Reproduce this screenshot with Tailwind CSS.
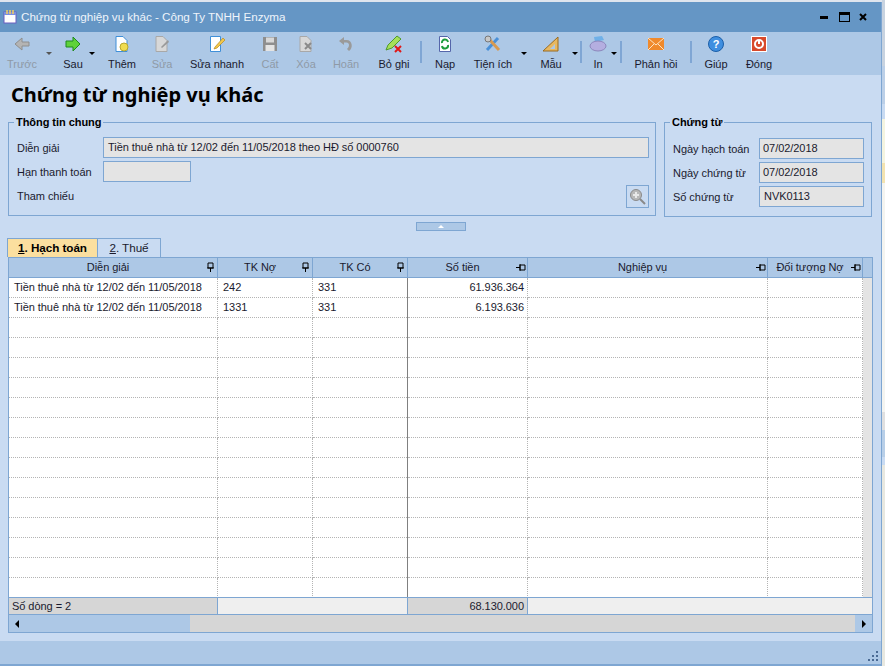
<!DOCTYPE html>
<html lang="en">
  <head>
    <meta charset="UTF-8" />
    <title>Chứng từ nghiệp vụ khác</title>
    <script src="https://cdn.jsdelivr.net/npm/@tailwindcss/browser@4"></script>
  </head>
  <body class="w-[885px] h-[666px] overflow-hidden bg-white font-['Liberation_Sans',Arial,sans-serif] text-[11px] tracking-[-0.05px] whitespace-nowrap text-[#1a1a2e]">
    <div class="flex h-[666px]">
      <div class="w-[882px] flex flex-col">
        <div class="h-[2px] shrink-0 bg-[#dfe5ee]"></div>
        <!-- title bar -->
        <div class="h-[30px] shrink-0 bg-[#6596c5] flex items-center pl-[2px] pr-[13px] border-r border-[#7ea6d2]">
          <svg width="16" height="16" viewBox="0 0 16 16"><rect x="2" y="3" width="12" height="11" fill="#fff" stroke="#6a5fc0"/><rect x="2" y="3" width="12" height="3" fill="#7b8fe0"/><path d="M5 1v4M8 1v4M11 1v4" stroke="#f4d060" stroke-width="1.500"/></svg>
          <span class="ml-[3px] text-[11.7px] text-[#eef4fb]">Chứng từ nghiệp vụ khác - Công Ty TNHH Enzyma</span>
          <div class="ml-auto flex items-center gap-[7px]">
            <div class="w-[8px] h-[3px] bg-black mt-[1px]"></div>
            <div class="w-[11px] h-[10px] border border-black border-t-[3px] ml-[4px]"></div>
            <svg width="10" height="10" viewBox="0 0 10 10" class="ml-[1px]"><path d="M2 2l6 6M8 2l-6 6" stroke="#000" stroke-width="2"/></svg>
          </div>
        </div>
        <!-- toolbar -->
        <div class="h-[43px] shrink-0 bg-[#adc8e6] flex border-r border-[#7ea6d2]">
          <div class="relative w-[44px] flex flex-col items-center text-[#8f9aa6]">
            <svg class="mt-[3px]" width="18" height="18" viewBox="0 0 18 18"><path d="M9 3L2 9l7 6v-4h7V7H9z" fill="#b4b4b4" stroke="#8e8e8e"/></svg>
            <span class="mt-[3px]">Trước</span>
            <div class="absolute left-[46px] top-[20px] w-0 h-0 border-x-[3px] border-x-transparent border-t-[3px] border-t-[#555]"></div>
          </div>
          <div class="relative w-[58px] flex flex-col items-center">
            <svg class="mt-[3px]" width="18" height="18" viewBox="0 0 18 18"><path d="M9 2l7 7-7 7v-4H2V6h7z" fill="#5fd23a" stroke="#1f8a1f"/></svg>
            <span class="mt-[3px]">Sau</span>
            <div class="absolute left-[45px] top-[20px] w-0 h-0 border-x-[3px] border-x-transparent border-t-[3px] border-t-black"></div>
          </div>
          <div class="w-[40px] flex flex-col items-center">
            <svg class="mt-[3px]" width="18" height="18" viewBox="0 0 18 18"><path d="M3 1.500h7l4 4v11H3z" fill="#fff" stroke="#3f8fd8"/><circle cx="11" cy="12" r="4" fill="#f0dc50" stroke="#b8a830"/></svg>
            <span class="mt-[3px]">Thêm</span>
          </div>
          <div class="w-[40px] flex flex-col items-center text-[#8f9aa6]">
            <svg class="mt-[3px]" width="18" height="18" viewBox="0 0 18 18"><path d="M3 1.500h7l4 4v11H3z" fill="#d8d8d8" stroke="#a8a8a8"/><path d="M8 12l7-7 1 2-7 6z" fill="#9a9a9a"/></svg>
            <span class="mt-[3px]">Sửa</span>
          </div>
          <div class="w-[70px] flex flex-col items-center">
            <svg class="mt-[3px]" width="18" height="18" viewBox="0 0 18 18"><path d="M2.500 1.500h10v15h-10z" fill="#fff" stroke="#3f8fd8"/><path d="M7 12l8-9 2 2-8 8-3 1z" fill="#f3c84a" stroke="#b88a20" stroke-width=".7"/></svg>
            <span class="mt-[3px]">Sửa nhanh</span>
          </div>
          <div class="w-[36px] flex flex-col items-center text-[#8f9aa6]">
            <svg class="mt-[3px]" width="18" height="18" viewBox="0 0 18 18"><rect x="2" y="2" width="14" height="14" fill="#8e8e8e"/><rect x="5" y="2.500" width="8" height="5" fill="#d8d8d8"/><rect x="4.500" y="10" width="9" height="6" fill="#e4e4e4"/></svg>
            <span class="mt-[3px]">Cất</span>
          </div>
          <div class="w-[36px] flex flex-col items-center text-[#8f9aa6]">
            <svg class="mt-[3px]" width="18" height="18" viewBox="0 0 18 18"><path d="M3 1.500h7l4 4v11H3z" fill="#d8d8d8" stroke="#a8a8a8"/><path d="M8 8l6 6M14 8l-6 6" stroke="#8a8a8a" stroke-width="2"/></svg>
            <span class="mt-[3px]">Xóa</span>
          </div>
          <div class="w-[44px] flex flex-col items-center text-[#8f9aa6]">
            <svg class="mt-[3px]" width="18" height="18" viewBox="0 0 18 18"><path d="M7 2L2 6l5 4V7.500h2.500c3 0 3.500 4 .5 6.500l2 2c4.500-3 3.500-11-2.500-11H7z" fill="#9a9a9a"/></svg>
            <span class="mt-[3px]">Hoãn</span>
          </div>
          <div class="w-[52px] flex flex-col items-center">
            <svg class="mt-[3px]" width="18" height="18" viewBox="0 0 18 18"><path d="M1 15l2-5L12 1l4 3-9 9z" fill="#a6e05a" stroke="#4f9a2a"/><path d="M10 11l6 6M16 11l-6 6" stroke="#e01818" stroke-width="2"/></svg>
            <span class="mt-[3px]">Bỏ ghi</span>
          </div>
          <div class="w-[2px] h-[22px] mt-[9px] bg-[#7fa6d4]"></div>
          <div class="w-[46px] flex flex-col items-center">
            <svg class="mt-[3px]" width="18" height="18" viewBox="0 0 18 18"><path d="M3.500 1.500h8l3 3v12h-11z" fill="#fff" stroke="#5566aa"/><path d="M6 8a3 3 0 0 1 6-1M12 10a3 3 0 0 1-6 1" fill="none" stroke="#1c9c3c" stroke-width="2"/></svg>
            <span class="mt-[3px]">Nạp</span>
          </div>
          <div class="relative w-[50px] flex flex-col items-center">
            <svg class="mt-[3px]" width="18" height="18" viewBox="0 0 18 18"><path d="M3 15L14 3" stroke="#4a90d8" stroke-width="3"/><path d="M4 3l11 12" stroke="#d89a50" stroke-width="3"/><circle cx="4" cy="4" r="3" fill="#c8c8c8" stroke="#777"/></svg>
            <span class="mt-[3px]">Tiện ích</span>
          </div>
          <div class="relative w-[12px]"><div class="absolute left-[3px] top-[20px] w-0 h-0 border-x-[3px] border-x-transparent border-t-[3px] border-t-black"></div></div>
          <div class="w-[42px] flex flex-col items-center">
            <svg class="mt-[3px]" width="18" height="18" viewBox="0 0 18 18"><path d="M1 16L16 2v14z" fill="#e8b860" stroke="#9a6a20"/><path d="M8 14l5-5v5z" fill="#adc8e6"/></svg>
            <span class="mt-[3px]">Mẫu</span>
          </div>
          <div class="relative w-[8px]"><div class="absolute left-0 top-[20px] w-0 h-0 border-x-[3px] border-x-transparent border-t-[3px] border-t-black"></div></div>
          <div class="w-[2px] h-[22px] mt-[9px] bg-[#7fa6d4]"></div>
          <div class="relative w-[32px] flex flex-col items-center">
            <svg class="mt-[3px]" width="18" height="18" viewBox="0 0 18 18"><path d="M5 2l8-1 2 4-9 2z" fill="#6fb0e8"/><ellipse cx="9" cy="11" rx="8" ry="5" fill="#b4aee0" stroke="#8c86bc"/></svg>
            <span class="mt-[3px]">In</span>
            <div class="absolute left-[29px] top-[20px] w-0 h-0 border-x-[3px] border-x-transparent border-t-[3px] border-t-black"></div>
          </div>
          <div class="w-[2px] h-[22px] mt-[9px] ml-[6px] bg-[#7fa6d4]"></div>
          <div class="w-[68px] flex flex-col items-center">
            <svg class="mt-[3px]" width="18" height="18" viewBox="0 0 18 18"><rect x="1" y="3" width="16" height="12" fill="#f08a2c"/><path d="M1 3l8 7 8-7M1 15l6-6M17 15l-6-6" fill="none" stroke="#fde4c4"/></svg>
            <span class="mt-[3px]">Phản hồi</span>
          </div>
          <div class="w-[2px] h-[22px] mt-[9px] bg-[#7fa6d4]"></div>
          <div class="w-[48px] flex flex-col items-center">
            <svg class="mt-[3px]" width="18" height="18" viewBox="0 0 18 18"><circle cx="9" cy="9" r="7.500" fill="#3f8fe0" stroke="#1c5fa8"/><text x="9" y="13" text-anchor="middle" font-size="11" font-weight="700" fill="#fff">?</text></svg>
            <span class="mt-[3px]">Giúp</span>
          </div>
          <div class="w-[38px] flex flex-col items-center">
            <svg class="mt-[3px]" width="18" height="18" viewBox="0 0 18 18"><rect x="1.500" y="1.500" width="15" height="15" fill="#d84a2c" stroke="#fff"/><circle cx="9" cy="9" r="4" fill="none" stroke="#fff" stroke-width="2"/><path d="M9 5v4" stroke="#fff" stroke-width="2"/></svg>
            <span class="mt-[3px]">Đóng</span>
          </div>
        </div>
        <!-- form body -->
        <div class="flex-1 bg-[#c9dbf2] border-r border-[#7ea6d2] flex flex-col min-h-0">
          <h1 class="h-[47px] shrink-0 pl-[11px] pt-[4px] font-['Noto_Sans',sans-serif] text-[20px] tracking-normal leading-[32px] font-bold text-black">Chứng từ nghiệp vụ khác</h1>
          <div class="flex shrink-0 pl-[8px] gap-[8px]">
            <div class="relative w-[648px] h-[94px] border border-[#7ea6d2]">
              <div class="absolute left-[5px] top-[-9px] px-[2px] bg-[#c9dbf2] font-bold text-black leading-[16px]">Thông tin chung</div>
              <div class="flex items-center h-[21px] mt-[14px] pl-[8px]">
                <span class="w-[86px] pt-[2px]">Diễn giải</span>
                <div class="w-[546px] h-[21px] bg-[#e4e4e4] border border-[#7ea6d2] px-[4px] leading-[18px]">Tiền thuê nhà từ 12/02 đến 11/05/2018 theo HĐ số 0000760</div>
              </div>
              <div class="flex items-center h-[21px] mt-[3px] pl-[8px]">
                <span class="w-[86px] pt-[2px]">Hạn thanh toán</span>
                <div class="w-[88px] h-[21px] bg-[#e4e4e4] border border-[#7ea6d2]"></div>
              </div>
              <div class="flex items-center h-[23px] mt-[3px] pl-[8px]">
                <span class="w-[609px]">Tham chiếu</span>
                <div class="w-[23px] h-[23px] border border-[#7ea6d2] flex items-center justify-center">
                  <svg width="17" height="17" viewBox="0 0 17 17"><circle cx="7" cy="7" r="5.500" fill="#b8b8b8" stroke="#8a8a8a"/><path d="M11 11l5 5" stroke="#8a8a8a" stroke-width="2"/><path d="M7 4v6M4 7h6" stroke="#e8e8e8" stroke-width="2"/></svg>
                </div>
              </div>
            </div>
            <div class="relative w-[208px] h-[95px] border border-[#7ea6d2]">
              <div class="absolute left-[5px] top-[-9px] px-[2px] bg-[#c9dbf2] font-bold text-black leading-[16px]">Chứng từ</div>
              <div class="flex items-center h-[21px] mt-[15px] pl-[8px]">
                <span class="w-[86px] pt-[1px]">Ngày hạch toán</span>
                <div class="w-[105px] h-[21px] bg-[#e4e4e4] border border-[#7ea6d2] px-[3px] leading-[19px]">07/02/2018</div>
              </div>
              <div class="flex items-center h-[21px] mt-[3px] pl-[8px]">
                <span class="w-[86px] pt-[1px]">Ngày chứng từ</span>
                <div class="w-[105px] h-[21px] bg-[#e4e4e4] border border-[#7ea6d2] px-[3px] leading-[19px]">07/02/2018</div>
              </div>
              <div class="flex items-center h-[21px] mt-[3px] pl-[8px]">
                <span class="w-[86px] pt-[1px]">Số chứng từ</span>
                <div class="w-[105px] h-[21px] bg-[#e4e4e4] border border-[#7ea6d2] px-[4px] leading-[19px]">NVK0113</div>
              </div>
            </div>
          </div>
          <div class="h-[21px] shrink-0 flex justify-center pt-[5px]">
            <div class="w-[50px] h-[9px] bg-[#adc8e6] border border-[#7ea6d2] flex items-center justify-center">
              <div class="w-0 h-0 border-x-[3px] border-x-transparent border-b-[3px] border-b-white"></div>
            </div>
          </div>
          <!-- tabs -->
          <div class="flex shrink-0 h-[19px] pl-[7px] text-[11.7px]">
            <div class="w-[91px] bg-[#fbdf9f] border border-b-0 border-[#7ea6d2] text-center font-bold text-black leading-[18px]"><span class="underline">1</span>. Hạch toán</div>
            <div class="w-[63px] border border-l-0 border-b-0 border-[#7ea6d2] text-center leading-[18px]"><span class="underline">2</span>. Thuế</div>
          </div>
          <!-- grid -->
          <div class="ml-[8px] shrink-0 w-[865px] border-x border-[#7ea6d2]">
            <div class="grid grid-cols-[209px_95px_95px_120px_240px_95px_9px] h-[21px] bg-[#adc8e6] border-y border-[#7ea6d2] leading-[19px]">
              <div class="relative text-center pr-[10px] border-r border-[#7ea6d2]">Diễn giải<svg class="absolute right-[2px] top-[4px]" width="9" height="10" viewBox="0 0 9 10"><path d="M2 1h5v5H2zM1 6h7M4.500 6v4" fill="none" stroke="#000"/></svg></div>
              <div class="relative text-center pr-[10px] border-r border-[#7ea6d2]">TK Nợ<svg class="absolute right-[2px] top-[4px]" width="9" height="10" viewBox="0 0 9 10"><path d="M2 1h5v5H2zM1 6h7M4.500 6v4" fill="none" stroke="#000"/></svg></div>
              <div class="relative text-center pr-[10px] border-r border-[#7ea6d2]">TK Có<svg class="absolute right-[2px] top-[4px]" width="9" height="10" viewBox="0 0 9 10"><path d="M2 1h5v5H2zM1 6h7M4.500 6v4" fill="none" stroke="#000"/></svg></div>
              <div class="relative text-center pr-[10px] border-r border-[#7ea6d2]">Số tiền<svg class="absolute right-[1px] top-[5px]" width="10" height="9" viewBox="0 0 10 9"><path d="M4 2h5v5H4zM4 1v7M0 4.500h4" fill="none" stroke="#000"/></svg></div>
              <div class="relative text-center pr-[10px] border-r border-[#7ea6d2]">Nghiệp vụ<svg class="absolute right-[1px] top-[5px]" width="10" height="9" viewBox="0 0 10 9"><path d="M4 2h5v5H4zM4 1v7M0 4.500h4" fill="none" stroke="#000"/></svg></div>
              <div class="relative text-center pr-[10px] border-r border-[#7ea6d2]">Đối tượng Nợ<svg class="absolute right-[1px] top-[5px]" width="10" height="9" viewBox="0 0 10 9"><path d="M4 2h5v5H4zM4 1v7M0 4.500h4" fill="none" stroke="#000"/></svg></div>
              <div></div>
            </div>
            <div class="h-[319px] overflow-hidden bg-white" id="rows"></div>
            <div class="grid grid-cols-[209px_190px_120px_344px] h-[18px] border-y border-[#7ea6d2] leading-[16px] bg-[#efefef]">
              <div class="bg-[#d6d6d6] border-r border-[#7ea6d2] pl-[3px]">Số dòng = 2</div>
              <div class="border-r border-[#7ea6d2]"></div>
              <div class="bg-[#d6d6d6] border-r border-[#7ea6d2] text-right pr-[3px]">68.130.000</div>
              <div></div>
            </div>
            <div class="flex h-[18px] bg-[#d6d6d6] border-b border-[#7ea6d2]">
              <div class="w-[181px] bg-[#adc8e6] flex items-center pl-[6px]"><div class="w-0 h-0 border-y-[4px] border-y-transparent border-r-[4px] border-r-black"></div></div>
              <div class="flex-1"></div>
              <div class="w-[17px] bg-[#adc8e6] flex items-center justify-center"><div class="w-0 h-0 border-y-[4px] border-y-transparent border-l-[4px] border-l-black"></div></div>
            </div>
          </div>
        </div>
        <!-- status bar -->
        <div class="relative h-[25px] shrink-0 bg-[#adc8e6] border-r border-b-2 border-[#7ea6d2]">
          <svg class="absolute right-[1px] bottom-[1px]" width="12" height="12" viewBox="0 0 12 12" fill="#4a6a94"><rect x="8" y="0" width="2" height="2"/><rect x="4" y="4" width="2" height="2"/><rect x="8" y="4" width="2" height="2"/><rect x="0" y="8" width="2" height="2"/><rect x="4" y="8" width="2" height="2"/><rect x="8" y="8" width="2" height="2"/></svg>
        </div>
      </div>
      <!-- sliver of the window behind -->
      <div class="w-[3px] flex flex-col">
        <div class="h-[66px] bg-[#c8d3e0]"></div>
        <div class="h-[38px] bg-[#bcd0e8]"></div>
        <div class="h-[15px] bg-[#c9dbf2]"></div>
        <div class="h-[44px] bg-[#f4f4e0]"></div>
        <div class="h-[20px] bg-[#f3e3b0]"></div>
        <div class="h-[229px] bg-[#f4f4f0]"></div>
        <div class="h-[18px] bg-[#e0e0e0]"></div>
        <div class="h-[27px] bg-[#b8cfe8]"></div>
        <div class="h-[8px] bg-[#c9dbf2]"></div>
        <div class="flex-1 bg-[#e8e8e0]"></div>
      </div>
    </div>
    <script>
      const rows = [
        ["Tiền thuê nhà từ 12/02 đến 11/05/2018", "242", "331", "61.936.364"],
        ["Tiền thuê nhà từ 12/02 đến 11/05/2018", "1331", "331", "6.193.636"],
      ];
      let html = "";
      for (let i = 0; i < 16; i++) {
        const r = rows[i] || ["", "", "", ""];
        html +=
          '<div class="grid grid-cols-[209px_95px_95px_120px_240px_95px_9px] h-[20px] leading-[19px]">' +
          '<div class="pl-[5px] border-r border-b border-dotted border-[#b4b4b4]">' + r[0] + "</div>" +
          '<div class="pl-[5px] border-r border-b border-dotted border-[#b4b4b4]">' + r[1] + "</div>" +
          '<div class="pl-[5px] border-r border-[#808080]"><div class="h-[19px]">' + r[2] + '</div><div class="-ml-[5px] border-b border-dotted border-[#b4b4b4]"></div></div>' +
          '<div class="pr-[3px] text-right border-r border-b border-dotted border-[#b4b4b4]">' + r[3] + "</div>" +
          '<div class="border-r border-b border-dotted border-[#b4b4b4]"></div>' +
          '<div class="border-r border-b border-dotted border-[#b4b4b4]"></div>' +
          '<div class="bg-[#e4e4e4]"></div>' +
          "</div>";
      }
      document.getElementById("rows").innerHTML = html;
    </script>
  </body>
</html>
